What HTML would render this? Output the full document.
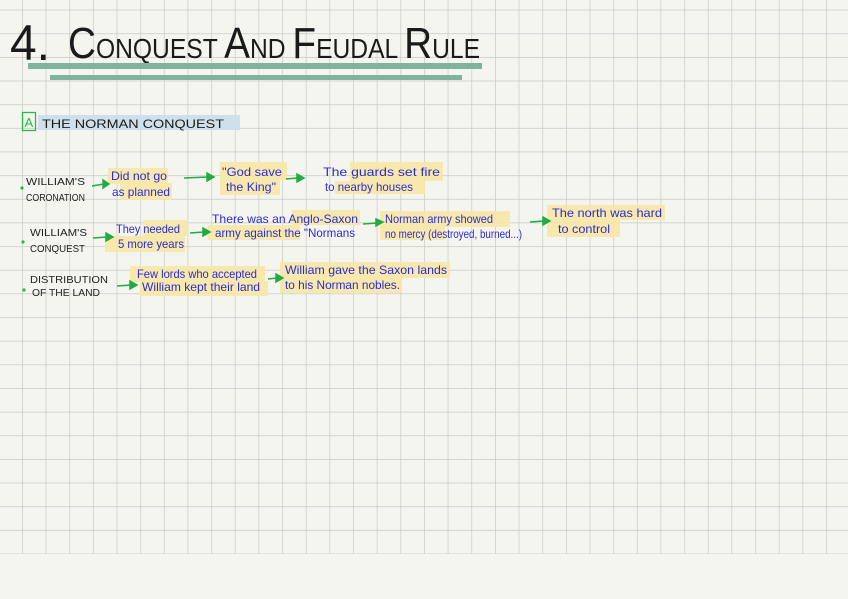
<!DOCTYPE html>
<html><head><meta charset="utf-8"><style>
html,body{margin:0;padding:0;background:#f5f5f0;}
svg{display:block;}
.h{font-family:"Liberation Sans",sans-serif;fill:#1a1a1a;}
.b{font-family:"Liberation Sans",sans-serif;fill:#2b2bd6;font-size:12px;}
.k{font-family:"Liberation Sans",sans-serif;fill:#222;font-size:10.5px;}
.y{fill:#f7e7a6;opacity:.9}
</style></head><body>
<svg width="848" height="599" viewBox="0 0 848 599" xmlns="http://www.w3.org/2000/svg">
<defs>
<pattern id="g" x="-1.65" y="9.65" width="23.65" height="23.65" patternUnits="userSpaceOnUse">
<path d="M0 0H23.65M0 0V23.65" stroke="#c9c9c4" stroke-width="1.4" fill="none"/>
</pattern>
</defs>
<rect width="848" height="599" fill="#f5f5f0"/>
<rect x="0" y="0" width="848" height="554" fill="url(#g)"/>

<!-- title -->
<g class="h">
<text x="10" y="60" font-size="50" textLength="40" lengthAdjust="spacingAndGlyphs">4.</text>
<text x="68" y="58" font-size="28" textLength="412" lengthAdjust="spacingAndGlyphs"><tspan font-size="44">C</tspan>ONQUEST <tspan font-size="44">A</tspan>ND <tspan font-size="44">F</tspan>EUDAL <tspan font-size="44">R</tspan>ULE</text>
</g>
<rect x="28" y="63" width="454" height="6" fill="#7fb49a"/>
<rect x="50" y="75" width="412" height="5" fill="#7fb49a"/>

<!-- section A -->
<rect x="38" y="115" width="202" height="15" fill="#cfe0ec"/>
<rect x="22.5" y="112.5" width="13" height="18" fill="none" stroke="#22bb44" stroke-width="1.3"/>
<text x="24.5" y="127" font-size="13" fill="#22bb44" font-family="Liberation Sans,sans-serif">A</text>
<text class="h" x="42" y="128" font-size="12" textLength="182" lengthAdjust="spacingAndGlyphs">THE    NORMAN    CONQUEST</text>

<!-- highlights -->
<rect class="y" x="108" y="168" width="60" height="16"/>
<rect class="y" x="120" y="183" width="52" height="17"/>
<rect class="y" x="220" y="162" width="67" height="18"/>
<rect class="y" x="220" y="180" width="60" height="15"/>
<rect class="y" x="350" y="162" width="93" height="19"/>
<rect class="y" x="335" y="181" width="90" height="13"/>
<rect class="y" x="143" y="220" width="45" height="16"/>
<rect class="y" x="105" y="236" width="80" height="16"/>
<rect class="y" x="292" y="210" width="68" height="15"/>
<rect class="y" x="208" y="225" width="92" height="15"/>
<rect class="y" x="380" y="211" width="130" height="16"/>
<rect class="y" x="380" y="227" width="65" height="13"/>
<rect class="y" x="547" y="205" width="118" height="15"/>
<rect class="y" x="547" y="220" width="73" height="17"/>
<rect class="y" x="130" y="266" width="135" height="16"/>
<rect class="y" x="140" y="281" width="128" height="15"/>
<rect class="y" x="280" y="262" width="170" height="16"/>
<rect class="y" x="280" y="278" width="122" height="15"/>

<!-- left labels -->
<g fill="#22bb44">
<circle cx="22" cy="188" r="1.6"/><circle cx="23" cy="242" r="1.6"/><circle cx="24" cy="290" r="1.6"/>
</g>
<text class="k" x="26" y="185" textLength="59" lengthAdjust="spacingAndGlyphs">WILLIAM'S</text>
<text class="k" x="26" y="201" textLength="59" lengthAdjust="spacingAndGlyphs">CORONATION</text>
<text class="k" x="30" y="236" textLength="57" lengthAdjust="spacingAndGlyphs">WILLIAM'S</text>
<text class="k" x="30" y="252" textLength="55" lengthAdjust="spacingAndGlyphs">CONQUEST</text>
<text class="k" x="30" y="283" textLength="78" lengthAdjust="spacingAndGlyphs">DISTRIBUTION</text>
<text class="k" x="32" y="296" textLength="68" lengthAdjust="spacingAndGlyphs">OF THE LAND</text>

<!-- arrows -->
<g stroke="#22aa44" stroke-width="1.5" fill="#22aa44">
<line x1="92" y1="186" x2="104" y2="184"/><polygon points="103,180 109,184 103,188"/>
<line x1="184" y1="178" x2="208" y2="177"/><polygon points="207,173 214,177 207,181"/>
<line x1="286" y1="179" x2="298" y2="178"/><polygon points="297,174 304,178 297,182"/>
<line x1="93" y1="238" x2="107" y2="237"/><polygon points="106,233 113,237 106,241"/>
<line x1="190" y1="233" x2="204" y2="232"/><polygon points="203,228 210,232 203,236"/>
<line x1="363" y1="224" x2="377" y2="223"/><polygon points="376,219 383,222 376,226"/>
<line x1="530" y1="222" x2="544" y2="221"/><polygon points="543,217 550,221 543,225"/>
<line x1="117" y1="286" x2="131" y2="285"/><polygon points="130,281 137,285 130,289"/>
<line x1="268" y1="279" x2="277" y2="278"/><polygon points="276,274 283,278 276,282"/>
</g>

<!-- blue text -->
<text class="b" x="111" y="180" textLength="56" lengthAdjust="spacingAndGlyphs">Did not go</text>
<text class="b" x="112" y="196" textLength="58" lengthAdjust="spacingAndGlyphs">as planned</text>
<text class="b" x="222" y="176" textLength="60" lengthAdjust="spacingAndGlyphs">"God save</text>
<text class="b" x="226" y="191" textLength="50" lengthAdjust="spacingAndGlyphs">the King"</text>
<text class="b" x="323" y="176" textLength="117" lengthAdjust="spacingAndGlyphs">The guards set fire</text>
<text class="b" x="325" y="191" textLength="88" lengthAdjust="spacingAndGlyphs">to nearby houses</text>
<text class="b" x="116" y="233" textLength="64" lengthAdjust="spacingAndGlyphs">They needed</text>
<text class="b" x="118" y="248" textLength="66" lengthAdjust="spacingAndGlyphs">5 more years</text>
<text class="b" x="212" y="223" textLength="146" lengthAdjust="spacingAndGlyphs">There was an Anglo-Saxon</text>
<text class="b" x="215" y="237" textLength="140" lengthAdjust="spacingAndGlyphs">army against the "Normans</text>
<text class="b" x="385" y="223" textLength="108" lengthAdjust="spacingAndGlyphs">Norman army showed</text>
<text class="b" x="385" y="238" textLength="137" lengthAdjust="spacingAndGlyphs">no mercy (destroyed, burned...)</text>
<text class="b" x="552" y="217" textLength="110" lengthAdjust="spacingAndGlyphs">The north was hard</text>
<text class="b" x="558" y="233" textLength="52" lengthAdjust="spacingAndGlyphs">to control</text>
<text class="b" x="137" y="278" textLength="120" lengthAdjust="spacingAndGlyphs">Few lords who accepted</text>
<text class="b" x="142" y="291" textLength="118" lengthAdjust="spacingAndGlyphs">William kept their land</text>
<text class="b" x="285" y="274" textLength="162" lengthAdjust="spacingAndGlyphs">William gave the Saxon lands</text>
<text class="b" x="285" y="289" textLength="115" lengthAdjust="spacingAndGlyphs">to his Norman nobles.</text>
</svg>
</body></html>
